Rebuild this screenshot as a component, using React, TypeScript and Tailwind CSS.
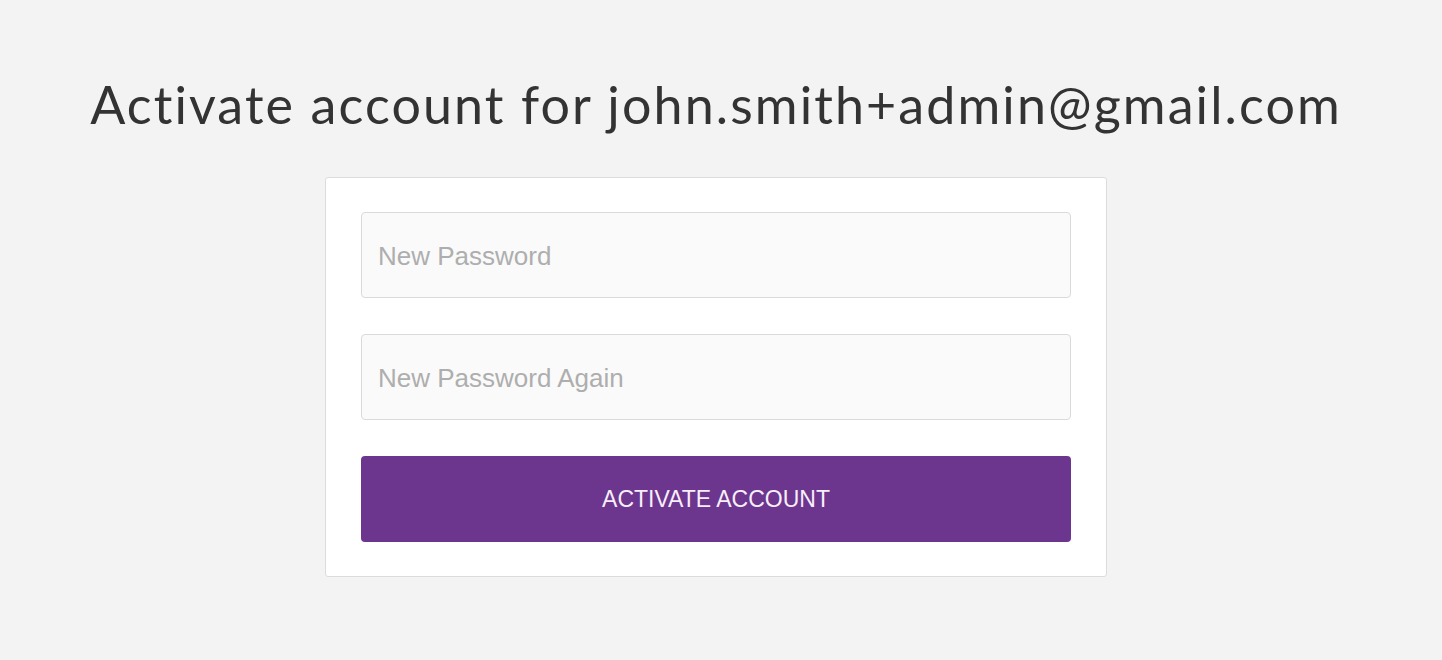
export default function App() {
  return (
    <div className="min-h-[660px] w-full bg-[#f3f3f3] flex flex-col items-center pt-[72px] pr-[10px]">
      <h1 className="text-[52px] leading-[64px] text-[#333333] tracking-[2.1px] font-['Lato','Noto_Sans',sans-serif]">
        Activate account for john.smith+admin@gmail.com
      </h1>
      <div className="mt-[41px] w-[782px] bg-white border border-[#dcdcdc] rounded-[3px] px-[35px] py-[34px] flex flex-col gap-[36px] font-['Liberation_Sans',Arial,sans-serif]">
        <input
          className="h-[86px] w-full bg-[#fafafa] border border-[#dadada] rounded-[4px] px-[16px] pt-[2px] text-[26px] text-[#333] placeholder:text-[#aeaeae] outline-none"
          placeholder="New Password"
          type="password"
        />
        <input
          className="h-[86px] w-full bg-[#fafafa] border border-[#dadada] rounded-[4px] px-[16px] pt-[2px] text-[26px] text-[#333] placeholder:text-[#aeaeae] outline-none"
          placeholder="New Password Again"
          type="password"
        />
        <button className="h-[86px] w-full bg-[#6c358e] rounded-[4px] text-[23px] text-[#f7eef9]">
          ACTIVATE ACCOUNT
        </button>
      </div>
    </div>
  );
}
